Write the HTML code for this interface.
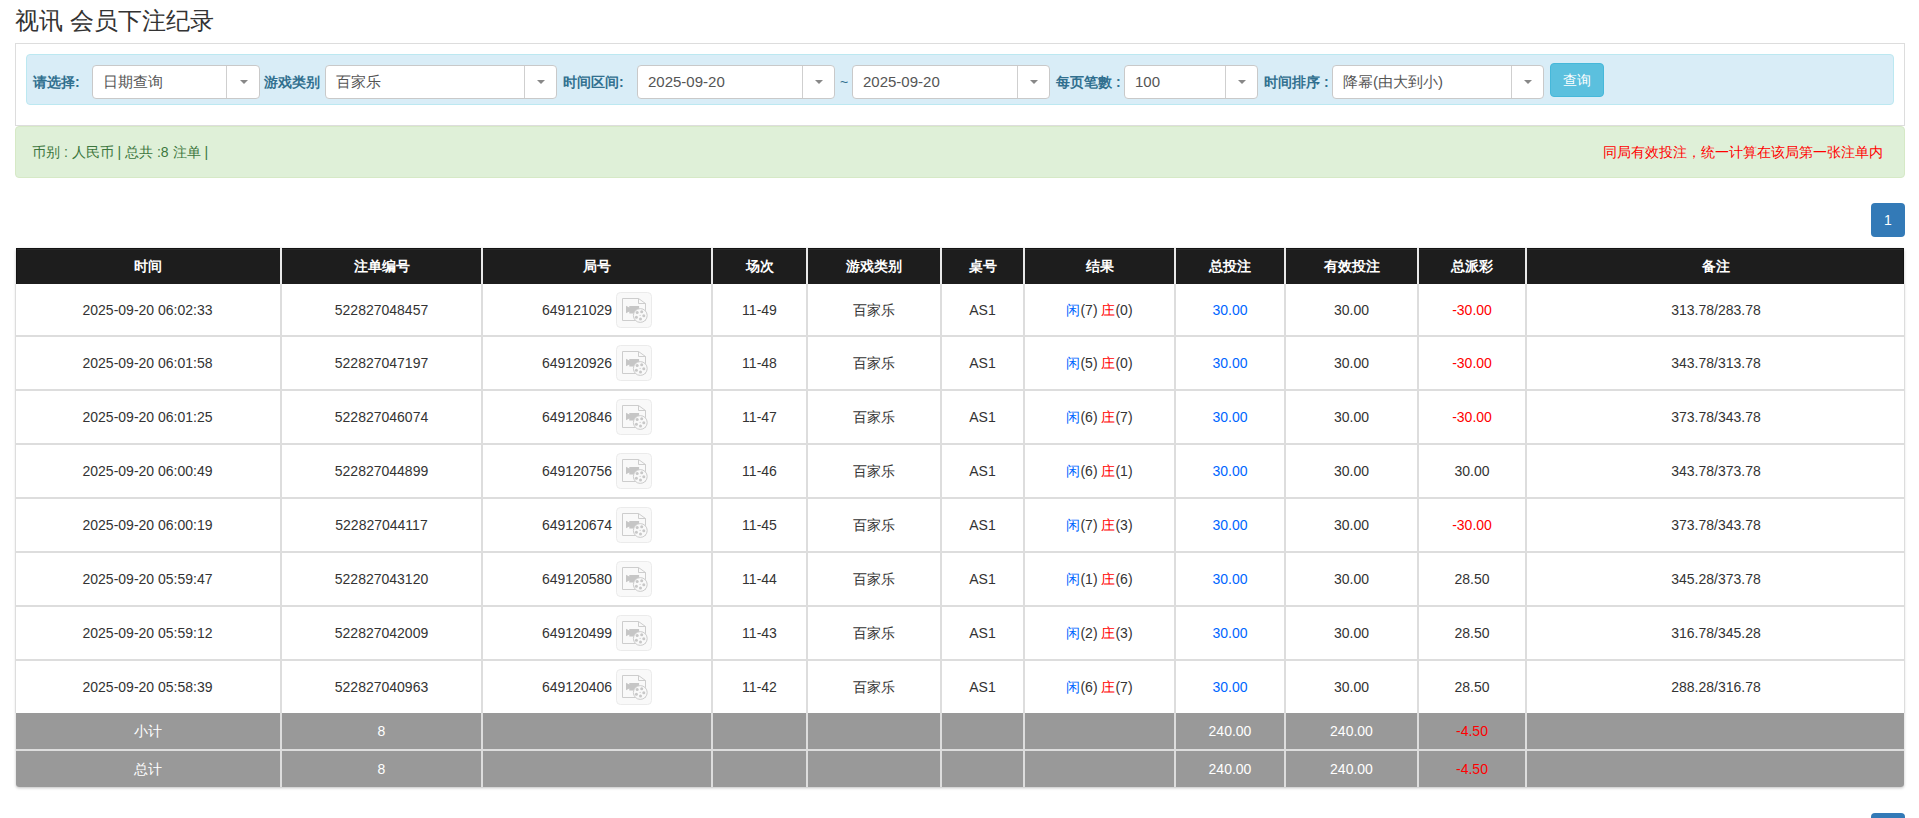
<!DOCTYPE html>
<html><head><meta charset="utf-8"><title>视讯 会员下注纪录</title>
<style>
html,body{margin:0;padding:0;background:#fff;}
body{width:1919px;height:818px;overflow:hidden;position:relative;font-family:"Liberation Sans",sans-serif;font-size:14px;color:#333;}
.a{position:absolute;white-space:nowrap;}
.title{left:15px;top:4px;font-size:24px;line-height:34px;color:#333;}
.panel{left:15px;top:43px;width:1888px;height:81px;border:1px solid #ddd;background:#fff;}
.bar{left:26px;top:54px;width:1866px;height:49px;border:1px solid #bce8f1;background:#d9edf7;border-radius:4px;}
.lbl{top:65px;height:34px;line-height:34px;font-weight:bold;color:#31708f;font-size:14px;}
.sel{top:65px;height:32px;border:1px solid #c9c9c9;border-radius:4px;background:#fff;font-size:15px;line-height:32px;color:#555;}
.sel .t{position:absolute;left:10px;top:0;}
.sel .d{position:absolute;top:0;bottom:0;width:1px;background:#cfcfcf;right:31px;}
.sel .k{position:absolute;right:11px;top:14px;width:0;height:0;border-left:4px solid transparent;border-right:4px solid transparent;border-top:4px solid #888;}
.btn{left:1550px;top:63px;width:52px;height:32px;border:1px solid #46b8da;background:#5bc0de;border-radius:4px;color:#fff;text-align:center;line-height:32px;font-size:14px;}
.alert{left:15px;top:126px;width:1888px;height:50px;border:1px solid #d6e9c6;background:#dff0d8;border-radius:4px;}
.al{left:32px;top:142px;line-height:20px;color:#3c763d;font-size:14px;}
.ar{right:36px;top:142px;line-height:20px;color:#f00;font-size:14px;}
.pg{left:1871px;width:34px;height:34px;background:#337ab7;border-radius:4px;color:#fff;text-align:center;line-height:34px;font-size:14px;}
.tshadow{left:16px;top:248px;width:1888px;height:539px;border-radius:3px;box-shadow:0 1px 3px rgba(0,0,0,0.25);background:#fff;}
.thead{position:absolute;left:16px;top:248px;width:1888px;height:36px;background:#1d1d1d;border-radius:1px 1px 0 0;box-shadow:inset 0 1px 0 #131313, inset 1px 0 0 #131313, inset -1px 0 0 #131313, inset 0 2px 0 #2a2a2a;}
.tbody{position:absolute;left:15px;width:1888px;background:#fff;border-left:1px solid #ddd;border-right:1px solid #ddd;}
.tfoot{position:absolute;left:16px;top:713px;width:1888px;height:74px;background:#999;border-radius:0 0 3px 3px;}
.fsep{position:absolute;left:16px;top:749px;width:1888px;height:2px;background:#ddd;}
.hsep{position:absolute;left:15px;width:1890px;height:2px;background:#ddd;}
.vl{position:absolute;width:2px;}
.hl{background:#e9e9e9;}
.bl{background:#ddd;}
.fl{background:#ddd;}
.c{position:absolute;text-align:center;white-space:nowrap;overflow:hidden;}
.th{color:#fff;font-size:14px;}
.td{color:#333;font-size:14px;}
.tf{color:#fff;font-size:14px;}
.blue{color:#0066ff;}
.red{color:#ff0000;}
.ic{display:inline-block;vertical-align:middle;margin-top:-3px;}
</style></head><body>
<div class="a title">视讯 会员下注纪录</div>
<div class="a panel"></div>
<div class="a bar"></div>
<div class="a lbl" style="left:33px">请选择:</div>
<div class="a sel" style="left:92px;width:166px"><span class="t">日期查询</span><span class="d" style="right:32px"></span><span class="k"></span></div>
<div class="a lbl" style="left:264px">游戏类别</div>
<div class="a sel" style="left:325px;width:230px"><span class="t">百家乐</span><span class="d"></span><span class="k"></span></div>
<div class="a lbl" style="left:563px">时间区间:</div>
<div class="a sel" style="left:637px;width:196px"><span class="t">2025-09-20</span><span class="d"></span><span class="k"></span></div>
<div class="a lbl" style="left:840px;font-weight:normal">~</div>
<div class="a sel" style="left:852px;width:196px"><span class="t">2025-09-20</span><span class="d"></span><span class="k"></span></div>
<div class="a lbl" style="left:1056px">每页笔數 :</div>
<div class="a sel" style="left:1124px;width:132px"><span class="t">100</span><span class="d"></span><span class="k"></span></div>
<div class="a lbl" style="left:1264px">时间排序 :</div>
<div class="a sel" style="left:1332px;width:210px"><span class="t">降幂(由大到小)</span><span class="d"></span><span class="k"></span></div>
<div class="a btn">查询</div>
<div class="a alert"></div>
<div class="a al">币别 : 人民币 | 总共 :8 注单 |</div>
<div class="a ar">同局有效投注，统一计算在该局第一张注单内</div>
<div class="a pg" style="top:203px">1</div>
<div class="a tshadow"></div>
<div class="thead"></div>
<div class="c th" style="left:15px;top:248px;width:265px;height:36px;line-height:36px"><b>时间</b></div>
<div class="c th" style="left:282px;top:248px;width:199px;height:36px;line-height:36px"><b>注单编号</b></div>
<div class="c th" style="left:483px;top:248px;width:228px;height:36px;line-height:36px"><b>局号</b></div>
<div class="c th" style="left:713px;top:248px;width:93px;height:36px;line-height:36px"><b>场次</b></div>
<div class="c th" style="left:808px;top:248px;width:132px;height:36px;line-height:36px"><b>游戏类别</b></div>
<div class="c th" style="left:942px;top:248px;width:81px;height:36px;line-height:36px"><b>桌号</b></div>
<div class="c th" style="left:1025px;top:248px;width:149px;height:36px;line-height:36px"><b>结果</b></div>
<div class="c th" style="left:1176px;top:248px;width:108px;height:36px;line-height:36px"><b>总投注</b></div>
<div class="c th" style="left:1286px;top:248px;width:131px;height:36px;line-height:36px"><b>有效投注</b></div>
<div class="c th" style="left:1419px;top:248px;width:106px;height:36px;line-height:36px"><b>总派彩</b></div>
<div class="c th" style="left:1527px;top:248px;width:378px;height:36px;line-height:36px"><b>备注</b></div>
<div class="vl hl" style="left:280px;top:248px;height:36px"></div>
<div class="vl hl" style="left:481px;top:248px;height:36px"></div>
<div class="vl hl" style="left:711px;top:248px;height:36px"></div>
<div class="vl hl" style="left:806px;top:248px;height:36px"></div>
<div class="vl hl" style="left:940px;top:248px;height:36px"></div>
<div class="vl hl" style="left:1023px;top:248px;height:36px"></div>
<div class="vl hl" style="left:1174px;top:248px;height:36px"></div>
<div class="vl hl" style="left:1284px;top:248px;height:36px"></div>
<div class="vl hl" style="left:1417px;top:248px;height:36px"></div>
<div class="vl hl" style="left:1525px;top:248px;height:36px"></div>
<div class="tbody" style="top:284px;height:429px"></div>
<div class="vl bl" style="left:280px;top:284px;height:429px"></div>
<div class="vl bl" style="left:481px;top:284px;height:429px"></div>
<div class="vl bl" style="left:711px;top:284px;height:429px"></div>
<div class="vl bl" style="left:806px;top:284px;height:429px"></div>
<div class="vl bl" style="left:940px;top:284px;height:429px"></div>
<div class="vl bl" style="left:1023px;top:284px;height:429px"></div>
<div class="vl bl" style="left:1174px;top:284px;height:429px"></div>
<div class="vl bl" style="left:1284px;top:284px;height:429px"></div>
<div class="vl bl" style="left:1417px;top:284px;height:429px"></div>
<div class="vl bl" style="left:1525px;top:284px;height:429px"></div>
<div class="hsep" style="top:335px"></div>
<div class="hsep" style="top:389px"></div>
<div class="hsep" style="top:443px"></div>
<div class="hsep" style="top:497px"></div>
<div class="hsep" style="top:551px"></div>
<div class="hsep" style="top:605px"></div>
<div class="hsep" style="top:659px"></div>
<div class="c td" style="left:15px;top:284px;width:265px;height:52px;line-height:52px">2025-09-20 06:02:33</div>
<div class="c td" style="left:282px;top:284px;width:199px;height:52px;line-height:52px">522827048457</div>
<div class="c td" style="left:483px;top:284px;width:228px;height:52px;line-height:52px">649121029 <svg class="ic" width="36" height="36" viewBox="0 0 36 36"><rect x="0.5" y="0.5" width="35" height="35" rx="4" ry="4" fill="#f9f9f9" stroke="#ebebeb"/><path d="M6.5 6.5 H22.5 L29.5 11.5 V28.5 H6.5 Z" fill="none" stroke="#cdcdcd" stroke-width="1"/><path d="M22.5 6.5 V11.5 H29.5" fill="none" stroke="#cdcdcd" stroke-width="1"/><path d="M10 13.7 L13.3 15.6 V14 H23.1 V21.4 H13.3 V19.5 L10 21.2 Z" fill="#c6c6c6"/><circle cx="24.3" cy="23.5" r="6.9" fill="#f9f9f9" stroke="#cccccc" stroke-width="1"/><circle cx="21.2" cy="20.4" r="1.5" fill="#c8c8c8"/><circle cx="25.7" cy="19.8" r="1.5" fill="#c8c8c8"/><circle cx="27.8" cy="23.7" r="1.5" fill="#c8c8c8"/><circle cx="24.5" cy="27" r="1.5" fill="#c8c8c8"/><circle cx="20.4" cy="25.3" r="1.5" fill="#c8c8c8"/><circle cx="24.1" cy="23.3" r="0.6" fill="#c8c8c8"/></svg></div>
<div class="c td" style="left:713px;top:284px;width:93px;height:52px;line-height:52px">11-49</div>
<div class="c td" style="left:808px;top:284px;width:132px;height:52px;line-height:52px">百家乐</div>
<div class="c td" style="left:942px;top:284px;width:81px;height:52px;line-height:52px">AS1</div>
<div class="c td" style="left:1025px;top:284px;width:149px;height:52px;line-height:52px"><span class="blue">闲</span>(7) <span class="red">庄</span>(0)</div>
<div class="c td" style="left:1176px;top:284px;width:108px;height:52px;line-height:52px"><span class="blue">30.00</span></div>
<div class="c td" style="left:1286px;top:284px;width:131px;height:52px;line-height:52px">30.00</div>
<div class="c td" style="left:1419px;top:284px;width:106px;height:52px;line-height:52px"><span class="red">-30.00</span></div>
<div class="c td" style="left:1527px;top:284px;width:378px;height:52px;line-height:52px">313.78/283.78</div>
<div class="c td" style="left:15px;top:337px;width:265px;height:52px;line-height:52px">2025-09-20 06:01:58</div>
<div class="c td" style="left:282px;top:337px;width:199px;height:52px;line-height:52px">522827047197</div>
<div class="c td" style="left:483px;top:337px;width:228px;height:52px;line-height:52px">649120926 <svg class="ic" width="36" height="36" viewBox="0 0 36 36"><rect x="0.5" y="0.5" width="35" height="35" rx="4" ry="4" fill="#f9f9f9" stroke="#ebebeb"/><path d="M6.5 6.5 H22.5 L29.5 11.5 V28.5 H6.5 Z" fill="none" stroke="#cdcdcd" stroke-width="1"/><path d="M22.5 6.5 V11.5 H29.5" fill="none" stroke="#cdcdcd" stroke-width="1"/><path d="M10 13.7 L13.3 15.6 V14 H23.1 V21.4 H13.3 V19.5 L10 21.2 Z" fill="#c6c6c6"/><circle cx="24.3" cy="23.5" r="6.9" fill="#f9f9f9" stroke="#cccccc" stroke-width="1"/><circle cx="21.2" cy="20.4" r="1.5" fill="#c8c8c8"/><circle cx="25.7" cy="19.8" r="1.5" fill="#c8c8c8"/><circle cx="27.8" cy="23.7" r="1.5" fill="#c8c8c8"/><circle cx="24.5" cy="27" r="1.5" fill="#c8c8c8"/><circle cx="20.4" cy="25.3" r="1.5" fill="#c8c8c8"/><circle cx="24.1" cy="23.3" r="0.6" fill="#c8c8c8"/></svg></div>
<div class="c td" style="left:713px;top:337px;width:93px;height:52px;line-height:52px">11-48</div>
<div class="c td" style="left:808px;top:337px;width:132px;height:52px;line-height:52px">百家乐</div>
<div class="c td" style="left:942px;top:337px;width:81px;height:52px;line-height:52px">AS1</div>
<div class="c td" style="left:1025px;top:337px;width:149px;height:52px;line-height:52px"><span class="blue">闲</span>(5) <span class="red">庄</span>(0)</div>
<div class="c td" style="left:1176px;top:337px;width:108px;height:52px;line-height:52px"><span class="blue">30.00</span></div>
<div class="c td" style="left:1286px;top:337px;width:131px;height:52px;line-height:52px">30.00</div>
<div class="c td" style="left:1419px;top:337px;width:106px;height:52px;line-height:52px"><span class="red">-30.00</span></div>
<div class="c td" style="left:1527px;top:337px;width:378px;height:52px;line-height:52px">343.78/313.78</div>
<div class="c td" style="left:15px;top:391px;width:265px;height:52px;line-height:52px">2025-09-20 06:01:25</div>
<div class="c td" style="left:282px;top:391px;width:199px;height:52px;line-height:52px">522827046074</div>
<div class="c td" style="left:483px;top:391px;width:228px;height:52px;line-height:52px">649120846 <svg class="ic" width="36" height="36" viewBox="0 0 36 36"><rect x="0.5" y="0.5" width="35" height="35" rx="4" ry="4" fill="#f9f9f9" stroke="#ebebeb"/><path d="M6.5 6.5 H22.5 L29.5 11.5 V28.5 H6.5 Z" fill="none" stroke="#cdcdcd" stroke-width="1"/><path d="M22.5 6.5 V11.5 H29.5" fill="none" stroke="#cdcdcd" stroke-width="1"/><path d="M10 13.7 L13.3 15.6 V14 H23.1 V21.4 H13.3 V19.5 L10 21.2 Z" fill="#c6c6c6"/><circle cx="24.3" cy="23.5" r="6.9" fill="#f9f9f9" stroke="#cccccc" stroke-width="1"/><circle cx="21.2" cy="20.4" r="1.5" fill="#c8c8c8"/><circle cx="25.7" cy="19.8" r="1.5" fill="#c8c8c8"/><circle cx="27.8" cy="23.7" r="1.5" fill="#c8c8c8"/><circle cx="24.5" cy="27" r="1.5" fill="#c8c8c8"/><circle cx="20.4" cy="25.3" r="1.5" fill="#c8c8c8"/><circle cx="24.1" cy="23.3" r="0.6" fill="#c8c8c8"/></svg></div>
<div class="c td" style="left:713px;top:391px;width:93px;height:52px;line-height:52px">11-47</div>
<div class="c td" style="left:808px;top:391px;width:132px;height:52px;line-height:52px">百家乐</div>
<div class="c td" style="left:942px;top:391px;width:81px;height:52px;line-height:52px">AS1</div>
<div class="c td" style="left:1025px;top:391px;width:149px;height:52px;line-height:52px"><span class="blue">闲</span>(6) <span class="red">庄</span>(7)</div>
<div class="c td" style="left:1176px;top:391px;width:108px;height:52px;line-height:52px"><span class="blue">30.00</span></div>
<div class="c td" style="left:1286px;top:391px;width:131px;height:52px;line-height:52px">30.00</div>
<div class="c td" style="left:1419px;top:391px;width:106px;height:52px;line-height:52px"><span class="red">-30.00</span></div>
<div class="c td" style="left:1527px;top:391px;width:378px;height:52px;line-height:52px">373.78/343.78</div>
<div class="c td" style="left:15px;top:445px;width:265px;height:52px;line-height:52px">2025-09-20 06:00:49</div>
<div class="c td" style="left:282px;top:445px;width:199px;height:52px;line-height:52px">522827044899</div>
<div class="c td" style="left:483px;top:445px;width:228px;height:52px;line-height:52px">649120756 <svg class="ic" width="36" height="36" viewBox="0 0 36 36"><rect x="0.5" y="0.5" width="35" height="35" rx="4" ry="4" fill="#f9f9f9" stroke="#ebebeb"/><path d="M6.5 6.5 H22.5 L29.5 11.5 V28.5 H6.5 Z" fill="none" stroke="#cdcdcd" stroke-width="1"/><path d="M22.5 6.5 V11.5 H29.5" fill="none" stroke="#cdcdcd" stroke-width="1"/><path d="M10 13.7 L13.3 15.6 V14 H23.1 V21.4 H13.3 V19.5 L10 21.2 Z" fill="#c6c6c6"/><circle cx="24.3" cy="23.5" r="6.9" fill="#f9f9f9" stroke="#cccccc" stroke-width="1"/><circle cx="21.2" cy="20.4" r="1.5" fill="#c8c8c8"/><circle cx="25.7" cy="19.8" r="1.5" fill="#c8c8c8"/><circle cx="27.8" cy="23.7" r="1.5" fill="#c8c8c8"/><circle cx="24.5" cy="27" r="1.5" fill="#c8c8c8"/><circle cx="20.4" cy="25.3" r="1.5" fill="#c8c8c8"/><circle cx="24.1" cy="23.3" r="0.6" fill="#c8c8c8"/></svg></div>
<div class="c td" style="left:713px;top:445px;width:93px;height:52px;line-height:52px">11-46</div>
<div class="c td" style="left:808px;top:445px;width:132px;height:52px;line-height:52px">百家乐</div>
<div class="c td" style="left:942px;top:445px;width:81px;height:52px;line-height:52px">AS1</div>
<div class="c td" style="left:1025px;top:445px;width:149px;height:52px;line-height:52px"><span class="blue">闲</span>(6) <span class="red">庄</span>(1)</div>
<div class="c td" style="left:1176px;top:445px;width:108px;height:52px;line-height:52px"><span class="blue">30.00</span></div>
<div class="c td" style="left:1286px;top:445px;width:131px;height:52px;line-height:52px">30.00</div>
<div class="c td" style="left:1419px;top:445px;width:106px;height:52px;line-height:52px"><span>30.00</span></div>
<div class="c td" style="left:1527px;top:445px;width:378px;height:52px;line-height:52px">343.78/373.78</div>
<div class="c td" style="left:15px;top:499px;width:265px;height:52px;line-height:52px">2025-09-20 06:00:19</div>
<div class="c td" style="left:282px;top:499px;width:199px;height:52px;line-height:52px">522827044117</div>
<div class="c td" style="left:483px;top:499px;width:228px;height:52px;line-height:52px">649120674 <svg class="ic" width="36" height="36" viewBox="0 0 36 36"><rect x="0.5" y="0.5" width="35" height="35" rx="4" ry="4" fill="#f9f9f9" stroke="#ebebeb"/><path d="M6.5 6.5 H22.5 L29.5 11.5 V28.5 H6.5 Z" fill="none" stroke="#cdcdcd" stroke-width="1"/><path d="M22.5 6.5 V11.5 H29.5" fill="none" stroke="#cdcdcd" stroke-width="1"/><path d="M10 13.7 L13.3 15.6 V14 H23.1 V21.4 H13.3 V19.5 L10 21.2 Z" fill="#c6c6c6"/><circle cx="24.3" cy="23.5" r="6.9" fill="#f9f9f9" stroke="#cccccc" stroke-width="1"/><circle cx="21.2" cy="20.4" r="1.5" fill="#c8c8c8"/><circle cx="25.7" cy="19.8" r="1.5" fill="#c8c8c8"/><circle cx="27.8" cy="23.7" r="1.5" fill="#c8c8c8"/><circle cx="24.5" cy="27" r="1.5" fill="#c8c8c8"/><circle cx="20.4" cy="25.3" r="1.5" fill="#c8c8c8"/><circle cx="24.1" cy="23.3" r="0.6" fill="#c8c8c8"/></svg></div>
<div class="c td" style="left:713px;top:499px;width:93px;height:52px;line-height:52px">11-45</div>
<div class="c td" style="left:808px;top:499px;width:132px;height:52px;line-height:52px">百家乐</div>
<div class="c td" style="left:942px;top:499px;width:81px;height:52px;line-height:52px">AS1</div>
<div class="c td" style="left:1025px;top:499px;width:149px;height:52px;line-height:52px"><span class="blue">闲</span>(7) <span class="red">庄</span>(3)</div>
<div class="c td" style="left:1176px;top:499px;width:108px;height:52px;line-height:52px"><span class="blue">30.00</span></div>
<div class="c td" style="left:1286px;top:499px;width:131px;height:52px;line-height:52px">30.00</div>
<div class="c td" style="left:1419px;top:499px;width:106px;height:52px;line-height:52px"><span class="red">-30.00</span></div>
<div class="c td" style="left:1527px;top:499px;width:378px;height:52px;line-height:52px">373.78/343.78</div>
<div class="c td" style="left:15px;top:553px;width:265px;height:52px;line-height:52px">2025-09-20 05:59:47</div>
<div class="c td" style="left:282px;top:553px;width:199px;height:52px;line-height:52px">522827043120</div>
<div class="c td" style="left:483px;top:553px;width:228px;height:52px;line-height:52px">649120580 <svg class="ic" width="36" height="36" viewBox="0 0 36 36"><rect x="0.5" y="0.5" width="35" height="35" rx="4" ry="4" fill="#f9f9f9" stroke="#ebebeb"/><path d="M6.5 6.5 H22.5 L29.5 11.5 V28.5 H6.5 Z" fill="none" stroke="#cdcdcd" stroke-width="1"/><path d="M22.5 6.5 V11.5 H29.5" fill="none" stroke="#cdcdcd" stroke-width="1"/><path d="M10 13.7 L13.3 15.6 V14 H23.1 V21.4 H13.3 V19.5 L10 21.2 Z" fill="#c6c6c6"/><circle cx="24.3" cy="23.5" r="6.9" fill="#f9f9f9" stroke="#cccccc" stroke-width="1"/><circle cx="21.2" cy="20.4" r="1.5" fill="#c8c8c8"/><circle cx="25.7" cy="19.8" r="1.5" fill="#c8c8c8"/><circle cx="27.8" cy="23.7" r="1.5" fill="#c8c8c8"/><circle cx="24.5" cy="27" r="1.5" fill="#c8c8c8"/><circle cx="20.4" cy="25.3" r="1.5" fill="#c8c8c8"/><circle cx="24.1" cy="23.3" r="0.6" fill="#c8c8c8"/></svg></div>
<div class="c td" style="left:713px;top:553px;width:93px;height:52px;line-height:52px">11-44</div>
<div class="c td" style="left:808px;top:553px;width:132px;height:52px;line-height:52px">百家乐</div>
<div class="c td" style="left:942px;top:553px;width:81px;height:52px;line-height:52px">AS1</div>
<div class="c td" style="left:1025px;top:553px;width:149px;height:52px;line-height:52px"><span class="blue">闲</span>(1) <span class="red">庄</span>(6)</div>
<div class="c td" style="left:1176px;top:553px;width:108px;height:52px;line-height:52px"><span class="blue">30.00</span></div>
<div class="c td" style="left:1286px;top:553px;width:131px;height:52px;line-height:52px">30.00</div>
<div class="c td" style="left:1419px;top:553px;width:106px;height:52px;line-height:52px"><span>28.50</span></div>
<div class="c td" style="left:1527px;top:553px;width:378px;height:52px;line-height:52px">345.28/373.78</div>
<div class="c td" style="left:15px;top:607px;width:265px;height:52px;line-height:52px">2025-09-20 05:59:12</div>
<div class="c td" style="left:282px;top:607px;width:199px;height:52px;line-height:52px">522827042009</div>
<div class="c td" style="left:483px;top:607px;width:228px;height:52px;line-height:52px">649120499 <svg class="ic" width="36" height="36" viewBox="0 0 36 36"><rect x="0.5" y="0.5" width="35" height="35" rx="4" ry="4" fill="#f9f9f9" stroke="#ebebeb"/><path d="M6.5 6.5 H22.5 L29.5 11.5 V28.5 H6.5 Z" fill="none" stroke="#cdcdcd" stroke-width="1"/><path d="M22.5 6.5 V11.5 H29.5" fill="none" stroke="#cdcdcd" stroke-width="1"/><path d="M10 13.7 L13.3 15.6 V14 H23.1 V21.4 H13.3 V19.5 L10 21.2 Z" fill="#c6c6c6"/><circle cx="24.3" cy="23.5" r="6.9" fill="#f9f9f9" stroke="#cccccc" stroke-width="1"/><circle cx="21.2" cy="20.4" r="1.5" fill="#c8c8c8"/><circle cx="25.7" cy="19.8" r="1.5" fill="#c8c8c8"/><circle cx="27.8" cy="23.7" r="1.5" fill="#c8c8c8"/><circle cx="24.5" cy="27" r="1.5" fill="#c8c8c8"/><circle cx="20.4" cy="25.3" r="1.5" fill="#c8c8c8"/><circle cx="24.1" cy="23.3" r="0.6" fill="#c8c8c8"/></svg></div>
<div class="c td" style="left:713px;top:607px;width:93px;height:52px;line-height:52px">11-43</div>
<div class="c td" style="left:808px;top:607px;width:132px;height:52px;line-height:52px">百家乐</div>
<div class="c td" style="left:942px;top:607px;width:81px;height:52px;line-height:52px">AS1</div>
<div class="c td" style="left:1025px;top:607px;width:149px;height:52px;line-height:52px"><span class="blue">闲</span>(2) <span class="red">庄</span>(3)</div>
<div class="c td" style="left:1176px;top:607px;width:108px;height:52px;line-height:52px"><span class="blue">30.00</span></div>
<div class="c td" style="left:1286px;top:607px;width:131px;height:52px;line-height:52px">30.00</div>
<div class="c td" style="left:1419px;top:607px;width:106px;height:52px;line-height:52px"><span>28.50</span></div>
<div class="c td" style="left:1527px;top:607px;width:378px;height:52px;line-height:52px">316.78/345.28</div>
<div class="c td" style="left:15px;top:661px;width:265px;height:52px;line-height:52px">2025-09-20 05:58:39</div>
<div class="c td" style="left:282px;top:661px;width:199px;height:52px;line-height:52px">522827040963</div>
<div class="c td" style="left:483px;top:661px;width:228px;height:52px;line-height:52px">649120406 <svg class="ic" width="36" height="36" viewBox="0 0 36 36"><rect x="0.5" y="0.5" width="35" height="35" rx="4" ry="4" fill="#f9f9f9" stroke="#ebebeb"/><path d="M6.5 6.5 H22.5 L29.5 11.5 V28.5 H6.5 Z" fill="none" stroke="#cdcdcd" stroke-width="1"/><path d="M22.5 6.5 V11.5 H29.5" fill="none" stroke="#cdcdcd" stroke-width="1"/><path d="M10 13.7 L13.3 15.6 V14 H23.1 V21.4 H13.3 V19.5 L10 21.2 Z" fill="#c6c6c6"/><circle cx="24.3" cy="23.5" r="6.9" fill="#f9f9f9" stroke="#cccccc" stroke-width="1"/><circle cx="21.2" cy="20.4" r="1.5" fill="#c8c8c8"/><circle cx="25.7" cy="19.8" r="1.5" fill="#c8c8c8"/><circle cx="27.8" cy="23.7" r="1.5" fill="#c8c8c8"/><circle cx="24.5" cy="27" r="1.5" fill="#c8c8c8"/><circle cx="20.4" cy="25.3" r="1.5" fill="#c8c8c8"/><circle cx="24.1" cy="23.3" r="0.6" fill="#c8c8c8"/></svg></div>
<div class="c td" style="left:713px;top:661px;width:93px;height:52px;line-height:52px">11-42</div>
<div class="c td" style="left:808px;top:661px;width:132px;height:52px;line-height:52px">百家乐</div>
<div class="c td" style="left:942px;top:661px;width:81px;height:52px;line-height:52px">AS1</div>
<div class="c td" style="left:1025px;top:661px;width:149px;height:52px;line-height:52px"><span class="blue">闲</span>(6) <span class="red">庄</span>(7)</div>
<div class="c td" style="left:1176px;top:661px;width:108px;height:52px;line-height:52px"><span class="blue">30.00</span></div>
<div class="c td" style="left:1286px;top:661px;width:131px;height:52px;line-height:52px">30.00</div>
<div class="c td" style="left:1419px;top:661px;width:106px;height:52px;line-height:52px"><span>28.50</span></div>
<div class="c td" style="left:1527px;top:661px;width:378px;height:52px;line-height:52px">288.28/316.78</div>
<div class="tfoot"></div>
<div class="fsep"></div>
<div class="vl fl" style="left:280px;top:713px;height:74px"></div>
<div class="vl fl" style="left:481px;top:713px;height:74px"></div>
<div class="vl fl" style="left:711px;top:713px;height:74px"></div>
<div class="vl fl" style="left:806px;top:713px;height:74px"></div>
<div class="vl fl" style="left:940px;top:713px;height:74px"></div>
<div class="vl fl" style="left:1023px;top:713px;height:74px"></div>
<div class="vl fl" style="left:1174px;top:713px;height:74px"></div>
<div class="vl fl" style="left:1284px;top:713px;height:74px"></div>
<div class="vl fl" style="left:1417px;top:713px;height:74px"></div>
<div class="vl fl" style="left:1525px;top:713px;height:74px"></div>
<div class="c tf" style="left:15px;top:713px;width:265px;height:36px;line-height:36px">小计</div>
<div class="c tf" style="left:282px;top:713px;width:199px;height:36px;line-height:36px">8</div>
<div class="c tf" style="left:483px;top:713px;width:228px;height:36px;line-height:36px"></div>
<div class="c tf" style="left:713px;top:713px;width:93px;height:36px;line-height:36px"></div>
<div class="c tf" style="left:808px;top:713px;width:132px;height:36px;line-height:36px"></div>
<div class="c tf" style="left:942px;top:713px;width:81px;height:36px;line-height:36px"></div>
<div class="c tf" style="left:1025px;top:713px;width:149px;height:36px;line-height:36px"></div>
<div class="c tf" style="left:1176px;top:713px;width:108px;height:36px;line-height:36px">240.00</div>
<div class="c tf" style="left:1286px;top:713px;width:131px;height:36px;line-height:36px">240.00</div>
<div class="c tf" style="left:1419px;top:713px;width:106px;height:36px;line-height:36px"><span class="red">-4.50</span></div>
<div class="c tf" style="left:1527px;top:713px;width:378px;height:36px;line-height:36px"></div>
<div class="c tf" style="left:15px;top:751px;width:265px;height:36px;line-height:36px">总计</div>
<div class="c tf" style="left:282px;top:751px;width:199px;height:36px;line-height:36px">8</div>
<div class="c tf" style="left:483px;top:751px;width:228px;height:36px;line-height:36px"></div>
<div class="c tf" style="left:713px;top:751px;width:93px;height:36px;line-height:36px"></div>
<div class="c tf" style="left:808px;top:751px;width:132px;height:36px;line-height:36px"></div>
<div class="c tf" style="left:942px;top:751px;width:81px;height:36px;line-height:36px"></div>
<div class="c tf" style="left:1025px;top:751px;width:149px;height:36px;line-height:36px"></div>
<div class="c tf" style="left:1176px;top:751px;width:108px;height:36px;line-height:36px">240.00</div>
<div class="c tf" style="left:1286px;top:751px;width:131px;height:36px;line-height:36px">240.00</div>
<div class="c tf" style="left:1419px;top:751px;width:106px;height:36px;line-height:36px"><span class="red">-4.50</span></div>
<div class="c tf" style="left:1527px;top:751px;width:378px;height:36px;line-height:36px"></div>
<div class="a pg" style="top:813px">1</div>
</body></html>
